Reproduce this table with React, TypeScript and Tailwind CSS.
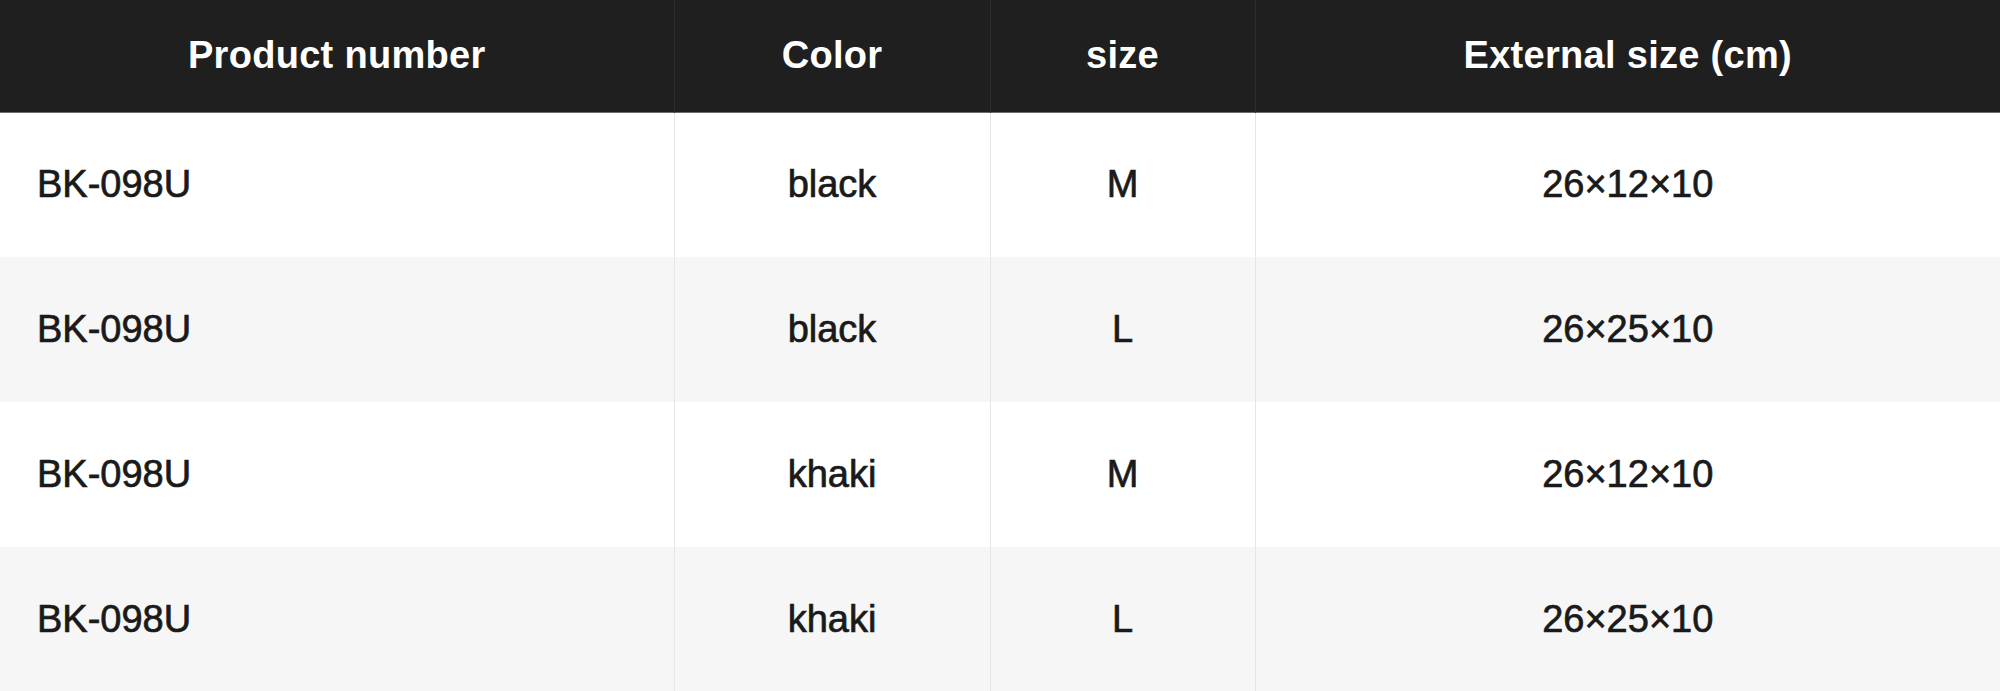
const rows = [
  { no: "BK-098U", color: "black", size: "M", ext: "26×12×10" },
  { no: "BK-098U", color: "black", size: "L", ext: "26×25×10" },
  { no: "BK-098U", color: "khaki", size: "M", ext: "26×12×10" },
  { no: "BK-098U", color: "khaki", size: "L", ext: "26×25×10" },
];

export default function App() {
  return (
    <div className="w-[2000px] bg-white font-['Liberation_Sans',Arial,sans-serif]">
      <table className="w-full table-fixed border-collapse">
        <colgroup>
          <col className="w-[674px]" />
          <col className="w-[316px]" />
          <col className="w-[265px]" />
          <col />
        </colgroup>
        <thead>
          <tr className="h-[112px] bg-[#1f1f1f] border-b border-[#6b6b6b] text-white text-[38px] font-bold tracking-[0.3px]">
            <th className="border-r border-[#2c2c2c] text-center">Product number</th>
            <th className="border-r border-[#2c2c2c] text-center">Color</th>
            <th className="border-r border-[#2c2c2c] text-center">size</th>
            <th className="text-center">External size (cm)</th>
          </tr>
        </thead>
        <tbody>
          {rows.map((r, i) => (
            <tr
              key={i}
              className={`h-[145px] text-[38px] text-[#1a1a1a] [-webkit-text-stroke:0.7px_#1a1a1a] ${i % 2 === 1 ? "bg-[#f6f6f6]" : "bg-white"}`}
            >
              <td className="border-r border-[#e6e6e6] pl-[37px] text-left">{r.no}</td>
              <td className="border-r border-[#e6e6e6] text-center">{r.color}</td>
              <td className="border-r border-[#e6e6e6] text-center">{r.size}</td>
              <td className="text-center">{r.ext}</td>
            </tr>
          ))}
        </tbody>
      </table>
    </div>
  );
}
